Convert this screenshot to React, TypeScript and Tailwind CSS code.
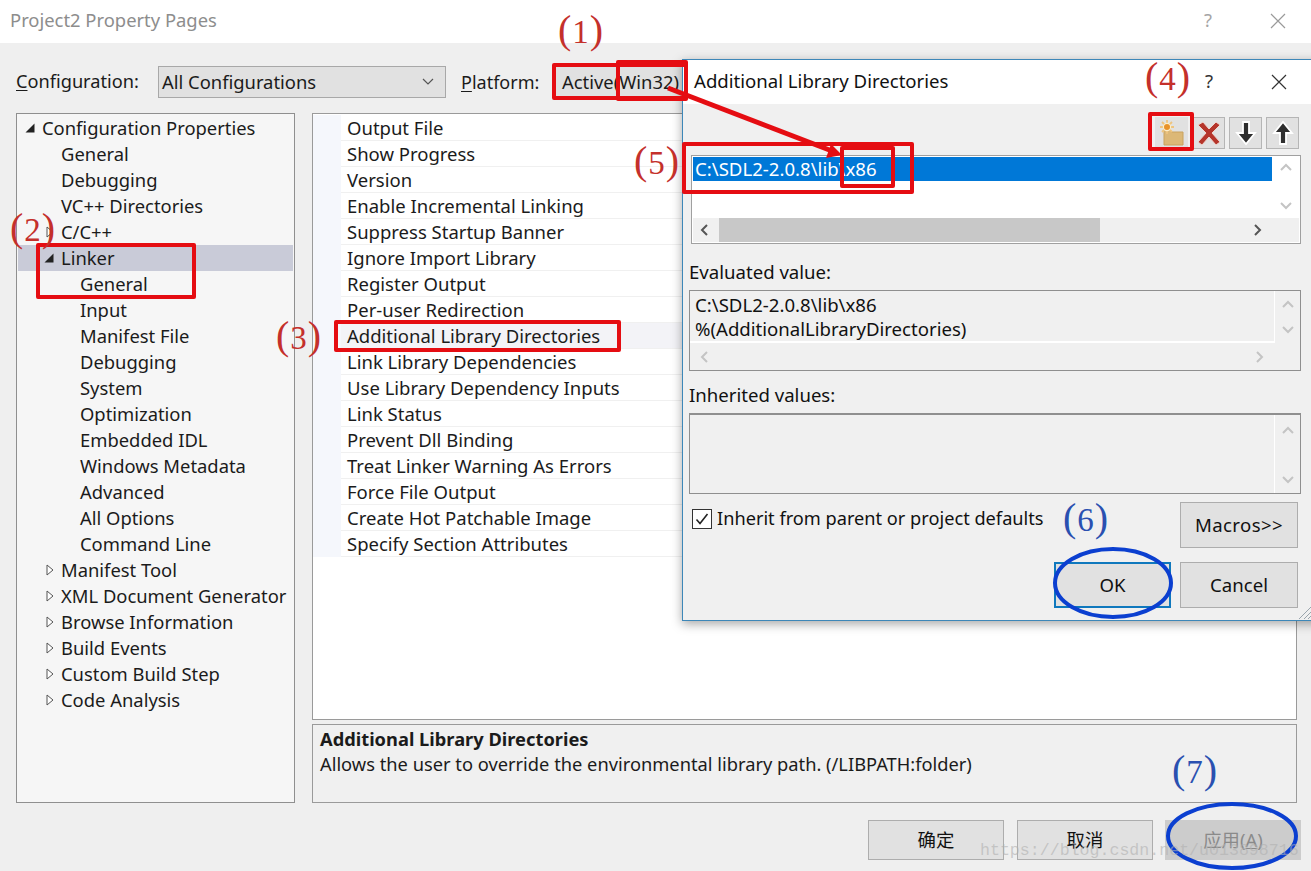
import type { ReactNode } from "react";

const TREE: { label: string; depth: 0 | 1 | 2; arrow?: "open" | "closed"; selected?: boolean }[] = [
  { label: "Configuration Properties", depth: 0, arrow: "open" },
  { label: "General", depth: 1 },
  { label: "Debugging", depth: 1 },
  { label: "VC++ Directories", depth: 1 },
  { label: "C/C++", depth: 1, arrow: "closed" },
  { label: "Linker", depth: 1, arrow: "open", selected: true },
  { label: "General", depth: 2 },
  { label: "Input", depth: 2 },
  { label: "Manifest File", depth: 2 },
  { label: "Debugging", depth: 2 },
  { label: "System", depth: 2 },
  { label: "Optimization", depth: 2 },
  { label: "Embedded IDL", depth: 2 },
  { label: "Windows Metadata", depth: 2 },
  { label: "Advanced", depth: 2 },
  { label: "All Options", depth: 2 },
  { label: "Command Line", depth: 2 },
  { label: "Manifest Tool", depth: 1, arrow: "closed" },
  { label: "XML Document Generator", depth: 1, arrow: "closed" },
  { label: "Browse Information", depth: 1, arrow: "closed" },
  { label: "Build Events", depth: 1, arrow: "closed" },
  { label: "Custom Build Step", depth: 1, arrow: "closed" },
  { label: "Code Analysis", depth: 1, arrow: "closed" },
];

const PROPS = [
  "Output File",
  "Show Progress",
  "Version",
  "Enable Incremental Linking",
  "Suppress Startup Banner",
  "Ignore Import Library",
  "Register Output",
  "Per-user Redirection",
  "Additional Library Directories",
  "Link Library Dependencies",
  "Use Library Dependency Inputs",
  "Link Status",
  "Prevent Dll Binding",
  "Treat Linker Warning As Errors",
  "Force File Output",
  "Create Hot Patchable Image",
  "Specify Section Attributes",
];

const DEPTH_PAD = { 0: "pl-[8px]", 1: "pl-[27px]", 2: "pl-[46px]" };

function Arrow({ kind }: { kind?: "open" | "closed" }) {
  return (
    <span className="w-[16px] shrink-0 flex items-center">
      {kind === "open" && (
        <svg width="10" height="10" viewBox="0 0 10 10" className="-ml-[1px]">
          <path d="M9.5 0.5v9h-9z" fill="#222" />
        </svg>
      )}
      {kind === "closed" && (
        <svg width="9" height="12" viewBox="0 0 9 12" className="ml-[1px]">
          <path d="M1 1l6 5-6 5z" fill="#fff" stroke="#555" />
        </svg>
      )}
    </span>
  );
}

function Chevron({ dir, light }: { dir: "up" | "down" | "left" | "right"; light?: boolean }) {
  const d = {
    up: "M2 9l5-5 5 5",
    down: "M2 5l5 5 5-5",
    left: "M9 2L4 7l5 5",
    right: "M5 2l5 5-5 5",
  }[dir];
  return (
    <svg width="14" height="14" viewBox="0 0 14 14" fill="none" stroke={light ? "#c4c4c4" : "#555"} strokeWidth="2">
      <path d={d} />
    </svg>
  );
}

function Button({ children, className }: { children: ReactNode; className: string }) {
  return (
    <div className={`flex items-center justify-center bg-[#e1e1e1] border border-[#adadad] text-[#111] ${className}`}>
      {children}
    </div>
  );
}

function ToolButton({ children, boxed = true }: { children: ReactNode; boxed?: boolean }) {
  return (
    <div className={`w-[33px] h-[32px] flex items-center justify-center bg-[#e1e1e1] ${boxed ? "border border-[#b5b5b5]" : ""}`}>
      {children}
    </div>
  );
}

function RedBox({ className }: { className: string }) {
  return <div className={`absolute border-[4px] border-[#e50d12] rounded-[2px] ${className}`} />;
}

function Num({ children, className }: { children: ReactNode; className: string }) {
  return (
    <div className={`absolute font-['Liberation_Serif',serif] text-[40px] leading-[40px] tracking-[1px] whitespace-nowrap ${className}`}>
      (<span className="text-[33px]">{children}</span>)
    </div>
  );
}

function SelectLike({ children, className }: { children: ReactNode; className: string }) {
  return (
    <div className={`h-[32px] flex items-center bg-[#e1e1e1] border border-[#a8a8a8] pl-[3px] ${className}`}>
      {children}
    </div>
  );
}

function Dialog() {
  return (
    <div className="absolute left-[682px] top-[59px] w-[640px] h-[562px] flex flex-col bg-[#f0f0f0] border border-[#3d87b8] shadow-[0_3px_10px_rgba(0,0,0,0.35)] text-[18.6px]">
      <div className="h-[44px] shrink-0 bg-white flex items-center pl-[11px] relative">
        <span className="text-[#111] -mt-[2px]">Additional Library Directories</span>
        <span className="absolute left-[522px] top-[7px] text-[#333]">?</span>
        <svg width="18" height="18" viewBox="0 0 18 18" className="absolute left-[587px] top-[13px]" stroke="#333" strokeWidth="1.2">
          <path d="M2 2l14 14M16 2L2 16" />
        </svg>
      </div>

      <div className="flex-1 flex flex-col pl-[6px] w-[628px] relative">
        <div className="flex justify-end gap-[4px] pt-[13px] pr-[12px] h-[51px]">
          <ToolButton boxed={false}>
            <svg width="30" height="30" viewBox="0 0 30 30">
              <path d="M7 12h5l2 2h12v13H7z" fill="#dcb877" stroke="#c9a25f" />
              <path d="M10 2v14M3 9h14M5 4l10 10M15 4L5 14" stroke="#eec47e" strokeWidth="1.8" />
              <circle cx="10" cy="9" r="3.6" fill="#e8922a" stroke="#fbeecb" strokeWidth="1.2" />
            </svg>
          </ToolButton>
          <ToolButton>
            <svg width="28" height="28" viewBox="0 0 28 28">
              <path d="M3 6l5-3 6 7 7-7 4 3-8 8 8 9-4 3-7-8-7 8-4-3 8-9z" fill="#b5352b" stroke="#eed6cf" />
            </svg>
          </ToolButton>
          <ToolButton>
            <svg width="24" height="26" viewBox="0 0 24 26">
              <path d="M9 2h6v11h6l-9 11-9-11h6z" fill="#2e2e2e" stroke="#fff" strokeWidth="1.8" />
            </svg>
          </ToolButton>
          <ToolButton>
            <svg width="24" height="26" viewBox="0 0 24 26">
              <path d="M9 24h6V13h6L12 2 3 13h6z" fill="#2e2e2e" stroke="#fff" strokeWidth="1.8" />
            </svg>
          </ToolButton>
        </div>

        <div className="ml-[2px] w-[610px] h-[89px] border border-[#a0a0a0] bg-white flex flex-col p-[1px] shrink-0">
          <div className="flex-1 flex">
            <div className="flex-1 flex flex-col">
              <div className="h-[24px] bg-[#0078d7] text-white flex items-center pl-[2px]">C:\SDL2-2.0.8\lib\x86</div>
            </div>
            <div className="w-[27px] flex flex-col items-center justify-between pt-[4px] pb-[6px]">
              <Chevron dir="up" light />
              <Chevron dir="down" light />
            </div>
          </div>
          <div className="h-[24px] bg-[#f0f0f0] flex items-center justify-between px-[5px] relative">
            <Chevron dir="left" />
            <div className="absolute left-[26px] top-0 h-[24px] w-[381px] bg-[#c8c8c8]" />
            <span className="mr-[30px]">
              <Chevron dir="right" />
            </span>
          </div>
        </div>

        <div className="mt-[15px] h-[26px] flex items-center text-[#111]">Evaluated value:</div>
        <div className="mt-[5px] w-[612px] h-[81px] border border-[#8f8f8f] flex flex-col shrink-0">
          <div className="flex-1 flex">
            <div className="flex-1 border-b-2 border-white pl-[5px] pt-[2px] text-[#111] leading-[24px]">
              <div>C:\SDL2-2.0.8\lib\x86</div>
              <div>%(AdditionalLibraryDirectories)</div>
            </div>
            <div className="w-[26px] flex flex-col items-center justify-between py-[7px] border-l border-white">
              <Chevron dir="up" light />
              <Chevron dir="down" light />
            </div>
          </div>
          <div className="h-[27px] flex items-center justify-between pl-[8px] pr-[34px]">
            <Chevron dir="left" light />
            <Chevron dir="right" light />
          </div>
        </div>

        <div className="mt-[11px] h-[26px] flex items-center text-[#111]">Inherited values:</div>
        <div className="mt-[5px] w-[612px] h-[81px] border border-[#8f8f8f] border-t-2 flex justify-end shrink-0">
          <div className="w-[26px] flex flex-col items-center justify-between pt-[9px] pb-[7px] border-l border-white">
            <Chevron dir="up" light />
            <Chevron dir="down" light />
          </div>
        </div>

        <div className="flex mt-[8px] h-[46px] w-[609px] justify-between">
          <div className="flex items-center h-[34px] ml-[3px]">
            <div className="w-[20px] h-[20px] border border-[#333] bg-white flex items-center justify-center mr-[5px]">
              <svg width="16" height="16" viewBox="0 0 16 16" fill="none" stroke="#222" strokeWidth="1.6">
                <path d="M2.5 8.5l3.5 4 7.5-9.5" />
              </svg>
            </div>
            <span className="text-[#111] text-[18.2px]">Inherit from parent or project defaults</span>
          </div>
          <Button className="w-[118px] h-[46px] tracking-[0.4px]">Macros&gt;&gt;</Button>
        </div>

        <div className="flex justify-end gap-[9px] mt-[14px] w-[609px]">
          <Button className="w-[117px] h-[46px] !border-2 !border-[#0f78bd]">OK</Button>
          <Button className="w-[118px] h-[46px]">Cancel</Button>
        </div>
      </div>

      <svg width="14" height="14" viewBox="0 0 14 14" className="absolute left-[615px] bottom-0" stroke="#9aa5ad">
        <path d="M1 13L13 1M6 13l7-7M10 13l3-3" />
      </svg>
    </div>
  );
}

export default function App() {
  return (
    <div className="relative w-[1311px] h-[871px] overflow-hidden bg-[#efefef] font-['Noto_Sans','Noto_Sans_CJK_SC',sans-serif] text-[18.4px] text-[#1b1b1b]">
      <div className="h-[43px] bg-white flex items-center justify-between pl-[10px] relative">
        <span className="text-[#8d8d8d] -mt-[4px]">Project2 Property Pages</span>
        <span className="absolute left-[1204px] top-[6px] text-[#a5a5a5]">?</span>
        <svg width="18" height="18" viewBox="0 0 18 18" className="absolute left-[1269px] top-[12px]" stroke="#9a9a9a" strokeWidth="1.2">
          <path d="M2 2l14 14M16 2L2 16" />
        </svg>
      </div>

      <div className="pl-[16px] pr-[10px]">
        <div className="flex items-center mt-[23px] h-[32px]">
          <span className="w-[142px] text-[18.2px]">
            <span className="underline underline-offset-2">C</span>onfiguration:
          </span>
          <SelectLike className="w-[288px] justify-between pr-[11px]">
            <span>All Configurations</span>
            <svg width="12" height="8" viewBox="0 0 12 8" fill="none" stroke="#555" strokeWidth="1.2">
              <path d="M1 1l5 5 5-5" />
            </svg>
          </SelectLike>
          <span className="ml-[15px] w-[92px] text-[18px]">
            <span className="underline underline-offset-2">P</span>latform:
          </span>
          <SelectLike className="w-[135px] pl-[8px]">
            <span className="whitespace-nowrap">Active(Win32)</span>
          </SelectLike>
        </div>

        <div className="flex gap-[17px] mt-[15px] h-[690px]">
          <div className="w-[279px] border border-[#8f8f8f] bg-[#f6f6f6] pt-[1px] px-[1px] shrink-0 text-[18.4px]">
            {TREE.map((t, i) => (
              <div
                key={i}
                className={`h-[26px] flex items-center ${DEPTH_PAD[t.depth]} ${t.selected ? "bg-[#c9cbd8]" : ""}`}
              >
                <Arrow kind={t.arrow} />
                <span>{t.label}</span>
              </div>
            ))}
          </div>

          <div className="w-[985px] flex flex-col gap-[4px]">
            <div className="h-[607px] border border-[#9a9a9a] bg-white pt-[1px] text-[18.5px]">
              {PROPS.map((p) => (
                <div
                  key={p}
                  className={`h-[26px] flex items-center border-b border-[#f0f0f0] ${p === "Additional Library Directories" ? "bg-[#f3f3f7]" : ""}`}
                >
                  <div className="w-[28px] h-[26px] bg-[#f5f7fc] shrink-0" />
                  <span className="pl-[6px]">{p}</span>
                </div>
              ))}
            </div>
            <div className="h-[79px] border border-[#9a9a9a] bg-[#f0f0f0] pl-[7px] pt-[1px] leading-[25px] text-[18.3px]">
              <div className="font-bold">Additional Library Directories</div>
              <div>Allows the user to override the environmental library path. (/LIBPATH:folder)</div>
            </div>
          </div>
        </div>

        <div className="flex justify-end mt-[17px]">
          <Button className="w-[136px] h-[40px] mr-[13px]">确定</Button>
          <Button className="w-[136px] h-[40px] mr-[12px]">取消</Button>
          <div className="w-[136px] h-[40px] flex items-center justify-center bg-[#cccccc] border border-[#cccccc] text-[#8a8a8a]">
            应用(<span className="underline">A</span>)
          </div>
        </div>
      </div>

      <Dialog />

      {/* red and blue markup drawn on top of the screenshot */}
      <RedBox className="left-[552px] top-[63px] w-[136px] h-[37px]" />
      <RedBox className="left-[616px] top-[60px] w-[72px] h-[41px]" />
      <RedBox className="left-[1148px] top-[112px] w-[46px] h-[39px]" />
      <RedBox className="left-[682px] top-[142px] w-[232px] h-[52px]" />
      <RedBox className="left-[840px] top-[146px] w-[55px] h-[42px]" />
      <RedBox className="left-[36px] top-[243px] w-[160px] h-[56px]" />
      <RedBox className="left-[334px] top-[320px] w-[287px] h-[32px]" />

      <svg width="1311" height="871" viewBox="0 0 1311 871" className="absolute left-0 top-0 pointer-events-none">
        <path d="M668 88L832 151" stroke="#e50d12" strokeWidth="5" fill="none" />
        <path d="M842 155L826 158L831 144z" fill="#e50d12" />
        <ellipse cx="1113" cy="583" rx="58" ry="34" fill="none" stroke="#0b3fd0" strokeWidth="4" />
        <ellipse cx="1232" cy="836" rx="64" ry="32" fill="none" stroke="#0b3fd0" strokeWidth="4" />
      </svg>

      <Num className="left-[558px] top-[10px] text-[#c4302b]">1</Num>
      <Num className="left-[10px] top-[208px] text-[#c4302b]">2</Num>
      <Num className="left-[276px] top-[316px] text-[#c4302b]">3</Num>
      <Num className="left-[1145px] top-[57px] text-[#c4302b]">4</Num>
      <Num className="left-[634px] top-[141px] text-[#c4302b]">5</Num>
      <Num className="left-[1063px] top-[498px] text-[#2a50b0]">6</Num>
      <Num className="left-[1172px] top-[750px] text-[#2a50b0]">7</Num>

      <div className="absolute left-[980px] top-[841px] font-['Liberation_Mono',monospace] text-[16.6px] leading-[20px] text-[#b0b0b0]/60 whitespace-nowrap">
        https://blog.csdn.net/u013898716
      </div>
    </div>
  );
}
